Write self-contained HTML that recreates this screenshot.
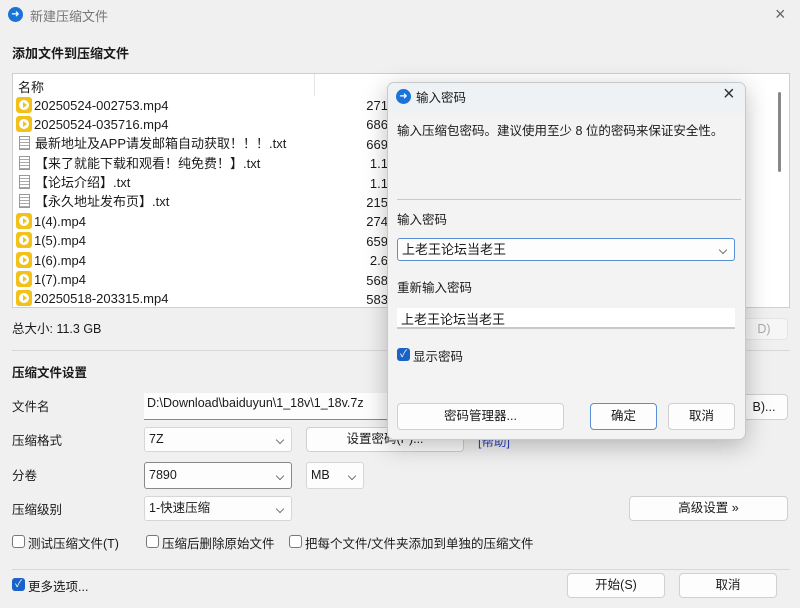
<!DOCTYPE html>
<html><head><meta charset="utf-8"><style>
*{box-sizing:border-box;margin:0;padding:0}
body{width:800px;height:608px;background:#f0f0f0;font-family:"Liberation Sans","Noto Sans CJK SC",sans-serif;font-size:12.5px;color:#1a1a1a;position:relative;overflow:hidden}
.a{position:absolute;white-space:nowrap}
.logo{width:15px;height:15px;border-radius:50%;background:#1a73d9;color:#fff;font-size:10px;text-align:center;line-height:15px}
.btn{position:absolute;background:#fdfdfd;border:1px solid #d0d0d0;border-radius:4px;text-align:center;font-size:12.5px}
.sel{position:absolute;background:#fdfdfd;border:1px solid #d6d6d6;border-radius:3px;padding-left:4px;font-size:12.5px}
.sel:after{content:"";position:absolute;right:8px;top:40%;width:5px;height:5px;border-right:1px solid #777;border-bottom:1px solid #777;transform:rotate(45deg)}
.cb{position:absolute;width:13px;height:13px;border:1px solid #777;border-radius:3px;background:#fff}
.cbx{position:absolute;width:13px;height:13px;border-radius:3px;background:#1a63c6;color:#fff;font-size:10px;line-height:13px;text-align:center}
.row{position:absolute;left:16px;height:19px;line-height:19px;font-size:13px}
.vid{display:inline-block;width:16px;height:16px;background:#f2c21b;border-radius:3px;vertical-align:-3px;margin-right:2px;position:relative}
.vid:after{content:"";position:absolute;left:3px;top:3px;width:10px;height:10px;border-radius:50%;background:#fff}
.vid:before{content:"";position:absolute;left:7px;top:5px;border-left:4px solid #f2c21b;border-top:3px solid transparent;border-bottom:3px solid transparent;z-index:2}
.txt{display:inline-block;width:11px;height:14px;border:1px solid #999;background:repeating-linear-gradient(#fff 0 2px,#aaa 2px 3px);vertical-align:-2px;margin:0 5px 0 3px}
</style></head><body>
<div class="a logo" style="left:8px;top:7px">➜</div>
<div class="a" style="left:30px;top:6px;color:#777;font-size:13px">新建压缩文件</div>
<div class="a" style="left:775px;top:4px;font-size:18px;color:#666">×</div>
<div class="a" style="left:12px;top:43px;font-weight:bold;font-size:13px">添加文件到压缩文件</div>
<div class="a" style="left:12px;top:73px;width:778px;height:235px;background:#fff;border:1px solid #cfcfcf"></div>
<div class="a" style="left:314px;top:74px;width:1px;height:22px;background:#e5e5e5"></div>
<div class="a" style="left:18px;top:77px;font-size:13px">名称</div>
<div class="a" style="left:778px;top:92px;width:3px;height:80px;background:#888;border-radius:2px"></div>
<div class="row" style="top:96px"><span class="vid"></span>20250524-002753.mp4</div>
<div class="row" style="top:115px"><span class="vid"></span>20250524-035716.mp4</div>
<div class="row" style="top:134px"><span class="txt"></span>最新地址及APP请发邮箱自动获取！！！.txt</div>
<div class="row" style="top:154px"><span class="txt"></span>【来了就能下载和观看！纯免费！】.txt</div>
<div class="row" style="top:173px"><span class="txt"></span>【论坛介绍】.txt</div>
<div class="row" style="top:192px"><span class="txt"></span>【永久地址发布页】.txt</div>
<div class="row" style="top:212px"><span class="vid"></span>1(4).mp4</div>
<div class="row" style="top:231px"><span class="vid"></span>1(5).mp4</div>
<div class="row" style="top:251px"><span class="vid"></span>1(6).mp4</div>
<div class="row" style="top:270px"><span class="vid"></span>1(7).mp4</div>
<div class="row" style="top:289px"><span class="vid"></span>20250518-203315.mp4</div>
<div class="a" style="left:362px;top:96px;line-height:19.4px;font-size:13px;text-align:right;width:26px;overflow:hidden">
271<br>686<br>669<br>1.1<br>1.1<br>215<br>274<br>659<br>2.6<br>568<br>583</div>
<div class="a" style="left:12px;top:318px">总大小: 11.3 GB</div>
<div class="btn" style="left:740px;top:318px;width:48px;height:22px;line-height:20px;color:#aaa;border-color:#e4e4e4;background:#f6f6f6">D)</div>
<div class="a" style="left:12px;top:350px;width:778px;height:1px;background:#d8d8d8"></div>
<div class="a" style="left:12px;top:362px;font-weight:bold">压缩文件设置</div>
<div class="a" style="left:12px;top:396px">文件名</div>
<div class="a" style="left:144px;top:393px;width:250px;height:27px;background:#fdfdfd;border-bottom:1px solid #888;padding:3px 3px">D:\Download\baiduyun\1_18v\1_18v.7z</div>
<div class="btn" style="left:740px;top:394px;width:48px;height:26px;line-height:24px">B)...</div>
<div class="a" style="left:12px;top:430px">压缩格式</div>
<div class="sel" style="left:144px;top:427px;width:148px;height:25px;line-height:23px">7Z</div>
<div class="btn" style="left:306px;top:427px;width:158px;height:25px;line-height:23px">设置密码(P)...</div>
<div class="a" style="left:478px;top:431px;color:#2a3fc0">[帮助]</div>
<div class="a" style="left:12px;top:465px">分卷</div>
<div class="sel" style="left:144px;top:462px;width:148px;height:27px;line-height:25px;border-color:#888">7890</div>
<div class="sel" style="left:306px;top:462px;width:58px;height:27px;line-height:25px">MB</div>
<div class="a" style="left:12px;top:499px">压缩级别</div>
<div class="sel" style="left:144px;top:496px;width:148px;height:25px;line-height:23px">1-快速压缩</div>
<div class="btn" style="left:629px;top:496px;width:159px;height:25px;line-height:23px">高级设置 »</div>
<div class="cb" style="left:12px;top:535px"></div><div class="a" style="left:28px;top:533px">测试压缩文件(T)</div>
<div class="cb" style="left:146px;top:535px"></div><div class="a" style="left:162px;top:533px">压缩后删除原始文件</div>
<div class="cb" style="left:289px;top:535px"></div><div class="a" style="left:305px;top:533px">把每个文件/文件夹添加到单独的压缩文件</div>
<div class="a" style="left:12px;top:569px;width:778px;height:1px;background:#d8d8d8"></div>
<div class="cbx" style="left:12px;top:578px">✓</div><div class="a" style="left:28px;top:576px">更多选项...</div>
<div class="btn" style="left:567px;top:573px;width:98px;height:25px;line-height:23px">开始(S)</div>
<div class="btn" style="left:679px;top:573px;width:98px;height:25px;line-height:23px">取消</div>

<div class="a" style="left:387px;top:82px;width:359px;height:358px;background:#f3f3f3;border:1px solid #c8c8c8;border-radius:7px;box-shadow:0 6px 24px rgba(0,0,0,.25);overflow:hidden">
 <div class="a" style="left:0;top:0;width:359px;height:30px;background:#eff2f5"></div>
 <div class="a logo" style="left:8px;top:6px">➜</div>
 <div class="a" style="left:28px;top:4px;font-size:12.5px">输入密码</div>
 <div class="a" style="left:335px;top:0px;font-size:20px;color:#333">×</div>
 <div class="a" style="left:9px;top:37px">输入压缩包密码。建议使用至少 8 位的密码来保证安全性。</div>
 <div class="a" style="left:9px;top:116px;width:344px;height:1px;background:#c8c8c8"></div>
 <div class="a" style="left:9px;top:126px">输入密码</div>
 <div class="sel" style="left:9px;top:155px;width:338px;height:23px;line-height:21px;border-color:#5a8fd6;font-size:13px">上老王论坛当老王</div>
 <div class="a" style="left:9px;top:194px">重新输入密码</div>
 <div class="a" style="left:9px;top:225px;width:338px;height:21px;background:#fff;border-bottom:2px solid #c8c8c8;padding:1px 4px;font-size:13px">上老王论坛当老王</div>
 <div class="cbx" style="left:9px;top:265px">✓</div><div class="a" style="left:25px;top:263px">显示密码</div>
 <div class="btn" style="left:9px;top:320px;width:167px;height:27px;line-height:25px">密码管理器...</div>
 <div class="btn" style="left:202px;top:320px;width:67px;height:27px;line-height:25px;border-color:#5a8fd6">确定</div>
 <div class="btn" style="left:280px;top:320px;width:67px;height:27px;line-height:25px">取消</div>
</div>
</body></html>
